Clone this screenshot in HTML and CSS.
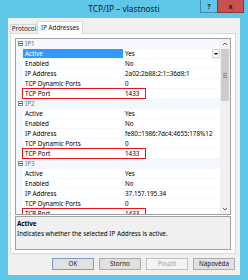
FILE: index.html
```html
<!DOCTYPE html>
<html lang="cs">
<head>
  <meta charset="UTF-8">
  <title>TCP/IP – vlastnosti</title>
  <link rel="stylesheet" href="styles.css">
</head>
<body>
  <div class="window">
    <div class="titlebar">
      <span class="title">TCP/IP – vlastnosti</span>
      <div class="caption">
        <span class="cap help">?</span>
        <span class="cap close">x</span>
      </div>
    </div>

    <div class="client">
      <div class="tabs">
        <span class="tab">Protocol</span>
        <span class="tab active">IP Addresses</span>
      </div>

      <div class="tabpage">
        <div class="propgrid">
          <div class="rows">
            <!-- IP1 -->
            <div class="row cat"><span class="gutter"><i class="toggle"></i></span><span class="cat-name">IP1</span></div>
            <div class="row"><span class="gutter"></span><span class="name selected">Active</span><span class="value">Yes<i class="drop"></i></span></div>
            <div class="row"><span class="gutter"></span><span class="name">Enabled</span><span class="value">No</span></div>
            <div class="row"><span class="gutter"></span><span class="name">IP Address</span><span class="value">2a02:2b88:2:1::36d8:1</span></div>
            <div class="row"><span class="gutter"></span><span class="name">TCP Dynamic Ports</span><span class="value">0</span></div>
            <div class="row"><span class="gutter"></span><span class="name">TCP Port</span><span class="value">1433</span><span class="mark"></span></div>

            <!-- IP2 -->
            <div class="row cat"><span class="gutter"><i class="toggle"></i></span><span class="cat-name">IP2</span></div>
            <div class="row"><span class="gutter"></span><span class="name">Active</span><span class="value">Yes</span></div>
            <div class="row"><span class="gutter"></span><span class="name">Enabled</span><span class="value">No</span></div>
            <div class="row"><span class="gutter"></span><span class="name">IP Address</span><span class="value">fe80::1986:7dc4:4655:178%12</span></div>
            <div class="row"><span class="gutter"></span><span class="name">TCP Dynamic Ports</span><span class="value">0</span></div>
            <div class="row"><span class="gutter"></span><span class="name">TCP Port</span><span class="value">1433</span><span class="mark"></span></div>

            <!-- IP3 -->
            <div class="row cat"><span class="gutter"><i class="toggle"></i></span><span class="cat-name">IP3</span></div>
            <div class="row"><span class="gutter"></span><span class="name">Active</span><span class="value">Yes</span></div>
            <div class="row"><span class="gutter"></span><span class="name">Enabled</span><span class="value">No</span></div>
            <div class="row"><span class="gutter"></span><span class="name">IP Address</span><span class="value">37.157.195.34</span></div>
            <div class="row"><span class="gutter"></span><span class="name">TCP Dynamic Ports</span><span class="value">0</span></div>
            <div class="row"><span class="gutter"></span><span class="name">TCP Port</span><span class="value">1433</span><span class="mark"></span></div>
          </div>

          <div class="scrollbar">
            <span class="sb-btn">
              <svg viewBox="0 0 10 10" width="10" height="10"><path d="M3 6l2-2 2 2" fill="none" stroke="#606060" stroke-width="1"/></svg>
            </span>
            <span class="sb-thumb"><i></i><i></i><i></i></span>
            <span class="sb-track"></span>
            <span class="sb-btn">
              <svg viewBox="0 0 10 10" width="10" height="10"><path d="M3 4l2 2 2-2" fill="none" stroke="#606060" stroke-width="1"/></svg>
            </span>
          </div>
        </div>

        <div class="desc">
          <p class="desc-title">Active</p>
          <p>Indicates whether the selected IP Address is active.</p>
        </div>
      </div>

      <div class="buttons">
        <span class="button default">OK</span>
        <span class="button">Storno</span>
        <span class="button disabled">Použít</span>
        <span class="button">Nápověda</span>
      </div>
    </div>
  </div>
</body>
</html>
```

FILE: styles.css
```css
/* Simple reset and base styles */
* {
  margin: 0;
  padding: 0;
  box-sizing: border-box;
}

body {
  font-family: "Noto Sans", "Open Sans", sans-serif;
  font-size: 6.3px;
  color: #000;
  background-color: #fff;
}

.window {
  width: 248px;
  height: 280px;
  background-color: #5ec7ea;
  padding: 0 8px 5px;
  display: flex;
  flex-direction: column;
}

/* title bar */
.titlebar {
  height: 18px;
  margin: 0 -8px;
  display: grid;
  grid-template-columns: 1fr auto 1fr;
}

.title {
  grid-column: 2;
  font-size: 8.3px;
  line-height: 18px;
  color: #1a1a1a;
}

.caption {
  grid-column: 3;
  justify-self: end;
  align-self: start;
  display: flex;
  margin-right: 4px;
}

.cap {
  height: 13px;
  display: flex;
  align-items: center;
  justify-content: center;
  font-size: 7px;
  font-weight: bold;
  color: #222;
  border: 1px solid rgba(0, 0, 0, 0.3);
  border-top: none;
}

.help {
  width: 17px;
  border-right: none;
}

.close {
  width: 27px;
  background-color: #c75050;
}

/* client area */
.client {
  flex: 1;
  background-color: #f0f0f0;
  padding: 4px 4px 5px 2px;
  display: flex;
  flex-direction: column;
}

.tabs {
  display: flex;
  align-items: flex-end;
  height: 11px;
  position: relative;
  z-index: 1;
}

.tab {
  height: 9px;
  line-height: 8px;
  width: 28px;
  text-align: center;
  background-color: #f0f0f0;
  border: 1px solid #d9d9d9;
  border-bottom: none;
  color: #1a1a1a;
  white-space: nowrap;
  overflow: hidden;
}

.tab.active {
  height: 13px;
  width: 46px;
  line-height: 11px;
  margin-bottom: -1px;
  margin-left: -1px;
  background-color: #fff;
}

.tabpage {
  height: 221px;
  background-color: #fff;
  border: 1px solid #d9d9d9;
  padding: 4px 4px 3px 4px;
  display: flex;
  flex-direction: column;
  gap: 1px;
}

/* property grid */
.propgrid {
  height: 177px;
  border: 1px solid #a0a0a0;
  display: flex;
  overflow: hidden;
}

.rows {
  flex: 1;
}

.row {
  height: 10px;
  display: grid;
  grid-template-columns: 7px 101px 1fr;
  line-height: 9px;
  position: relative;
}

.gutter {
  background-color: #f4f7fc;
  position: relative;
}

.name {
  padding-left: 2px;
  border-right: 1px solid #f4f7fc;
  border-bottom: 1px solid #f4f7fc;
  white-space: nowrap;
}

.name.selected {
  background-color: #3399ff;
  color: #fff;
}

.value {
  padding-left: 1px;
  border-bottom: 1px solid #f4f7fc;
  white-space: nowrap;
  position: relative;
}

.drop {
  position: absolute;
  right: 0;
  top: 0;
  width: 8px;
  height: 9px;
  background-color: #f6f6f6;
  border: 1px solid #d6d6d6;
}

.drop::after {
  content: "";
  position: absolute;
  left: 1px;
  top: 3px;
  border-left: 2.5px solid transparent;
  border-right: 2.5px solid transparent;
  border-top: 2.5px solid #000;
}

.row.cat {
  background-color: #f4f7fc;
  grid-template-columns: 7px 1fr;
}

.cat-name {
  padding-left: 2px;
  color: #6d6d6d;
}

.toggle {
  position: absolute;
  left: 2px;
  top: 2px;
  width: 5px;
  height: 5px;
  border: 1px solid #8a8a8a;
  background-color: #fff;
}

.toggle::after {
  content: "";
  position: absolute;
  left: 0;
  top: 1px;
  width: 3px;
  height: 1px;
  background-color: #555;
}

/* red annotation boxes */
.mark {
  position: absolute;
  left: 6px;
  top: -1px;
  width: 124px;
  height: 11px;
  border: 1.5px solid #e8141c;
}

/* scrollbar */
.scrollbar {
  width: 10px;
  background-color: #f0f0f0;
  display: flex;
  flex-direction: column;
}

.sb-btn {
  height: 10px;
  display: block;
  background-color: #f0f0f0;
}

.sb-btn svg {
  display: block;
}

.sb-thumb {
  height: 52px;
  margin: 0 1px;
  background-color: #cdcdcd;
  display: flex;
  flex-direction: column;
  align-items: center;
  justify-content: center;
  gap: 1px;
}

.sb-thumb i {
  width: 4px;
  height: 1px;
  background-color: #8a8a8a;
}

.sb-track {
  flex: 1;
}

/* description */
.desc {
  flex: 1;
  background-color: #f0f0f0;
  border: 1px solid #a0a0a0;
  padding: 2px 1px 0;
  line-height: 10px;
}

.desc-title {
  font-weight: bold;
}

/* dialog buttons */
.buttons {
  margin-top: 4px;
  display: flex;
  justify-content: flex-end;
  gap: 5px;
  padding-right: 1px;
}

.button {
  width: 42px;
  height: 12px;
  line-height: 10px;
  text-align: center;
  background-color: #e1e1e1;
  border: 1px solid #adadad;
  color: #1a1a1a;
}

.button.default {
  border-color: #7a9cc6;
}

.button.disabled {
  background-color: #f4f4f4;
  border-color: #bfbfbf;
  color: #a0a0a0;
}
```
